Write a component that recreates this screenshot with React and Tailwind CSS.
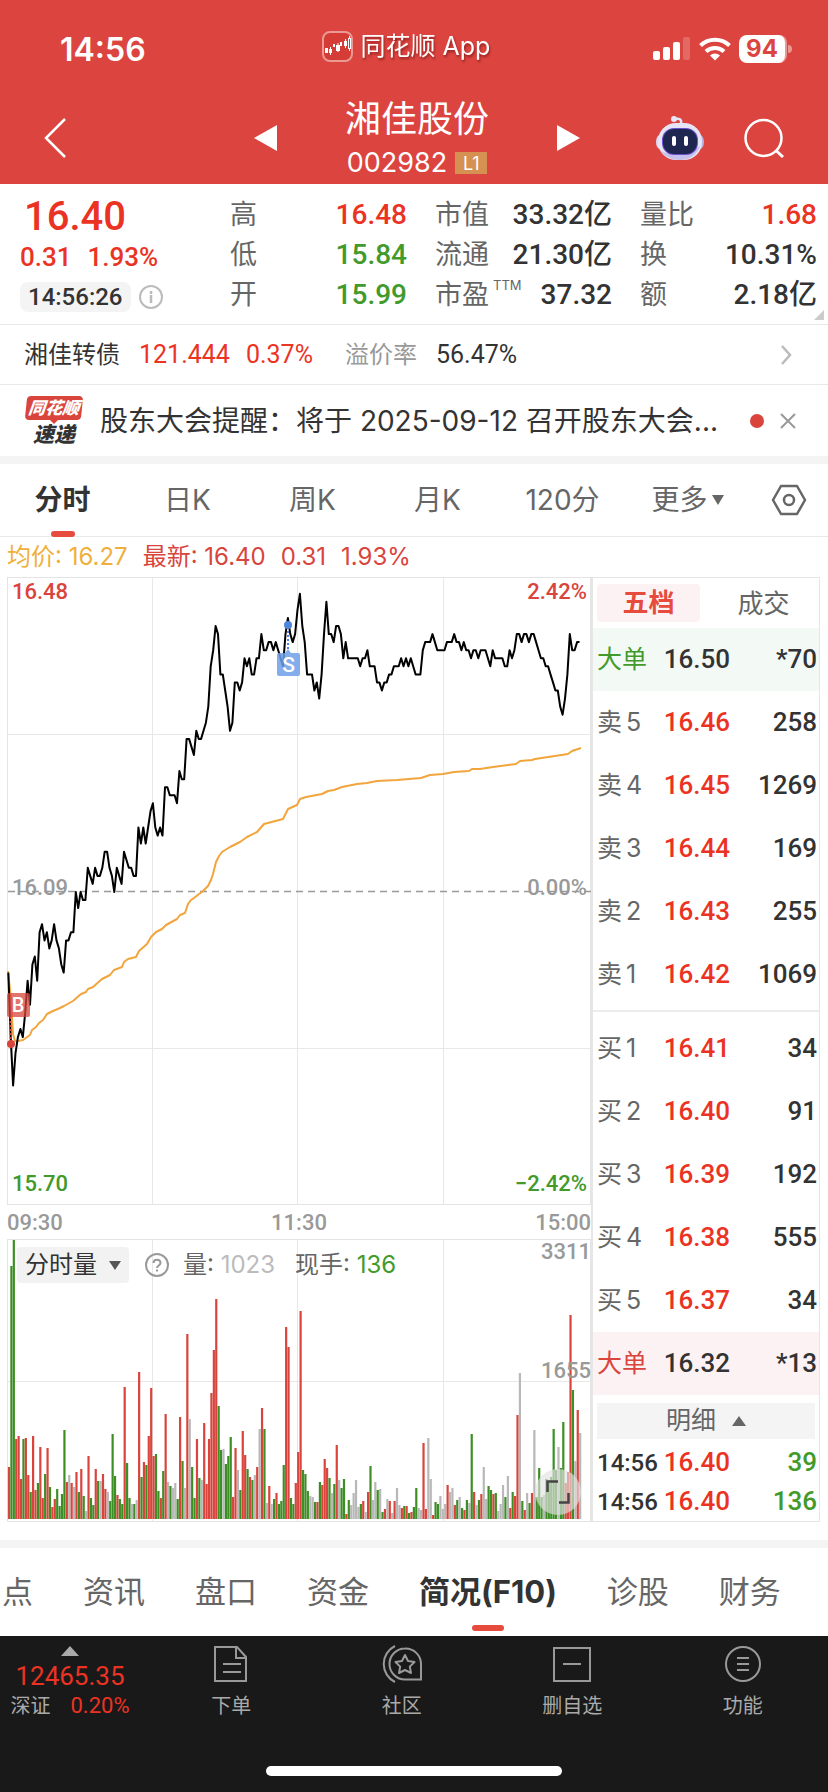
import { clsx } from 'clsx';

const PRICE_STEPS = [
  -10, -18, -24, -20, -18, -17, -18, -15, -11, -14, -9, -8, -11, -5, -4, -6, -5, -7, -6, -4,
  -6, -7, -9, -10, -6, -6, -5, -5, 0, -2, 0, -1, -1, 3, 2, 1, 3, 2, 2, 3,
  5, 5, 3, 2, 0, 3, 2, 1, 5, 4, 3, 3, 2, 2, 8, 6, 8, 6, 8, 10,
  11, 8, 7, 8, 7, 13, 13, 12, 12, 12, 11, 15, 14, 14, 19, 19, 18, 17, 20, 19,
  19, 20, 21, 23, 28, 30, 33, 32, 27, 27, 25, 23, 20, 21, 26, 26, 25, 26, 29, 28,
  29, 27, 27, 29, 29, 32, 30, 30, 31, 31, 30, 31, 30, 29, 28, 32, 34, 32, 31, 32,
  35, 37, 33, 31, 27, 27, 27, 25, 26, 24, 27, 32, 36, 32, 32, 31, 33, 33, 32, 29,
  31, 29, 29, 29, 29, 29, 28, 29, 29, 30, 28, 28, 28, 26, 26, 25, 26, 26, 27, 27,
  28, 28, 28, 29, 28, 29, 28, 29, 28, 27, 27, 27, 30, 31, 31, 31, 32, 31, 30, 30,
  30, 30, 31, 31, 31, 32, 31, 31, 30, 31, 30, 30, 29, 30, 30, 29, 30, 30, 30, 29,
  28, 30, 29, 29, 29, 29, 28, 28, 30, 29, 30, 32, 32, 31, 32, 32, 31, 32, 32, 31,
  30, 29, 29, 28, 28, 27, 26, 25, 25, 23, 22, 24, 27, 32, 30, 30, 31, 31,
];

const AVERAGE_LINE =
  '1,394 4,422 6,457 8,464 11,464 16,463 23,458 25,453 29,450 32,446 36,443 40,437 46,434 53,431 57,429 66,424 74,417 79,415 81,412 86,410 95,402 103,398 107,393 115,390 117,385 121,382 129,380 132,374 140,367 144,360 149,355 155,352 159,348 170,342 173,338 178,336 181,327 184,323 187,321 192,317 195,315 201,309 204,303 206,297 209,285 212,279 215,275 223,270 233,265 240,260 250,255 257,247 276,242 281,232 290,228 293,222 299,220 315,217 321,214 327,213 335,210 350,207 360,206 370,204 390,203 414,201 423,198 436,197 447,195 462,194 465,192 473,192 486,190 509,187 513,184 525,183 528,182 561,177 565,174 574,171';

// one entry per minute: r = up, g = down, x = flat, followed by the bar height
const VOLUME =
  'r52 g253 g279 r80 r83 r40 g80 r81 r44 g27 r83 r29 g36 r72 r21 g45 r71 g32 r12 r20 g30 g13 g25 g89 r37 x44 r36 x32 r47 g27 r50 g23 x8 r63 g21 g14 r50 g38 x38 r45 r30 x27 g18 g85 g43 r24 g20 g15 r132 g56 g21 x15 g15 x19 r147 g42 r57 g54 r83 r131 r63 g65 g28 r21 g48 r105 x37 g33 x31 x36 g20 r102 g58 x31 r185 x100 g52 g21 r80 g41 x39 r96 r35 r80 r126 r169 r220 g113 g69 x70 g55 g63 g82 r22 r71 x49 g29 r88 r64 g50 r42 g39 x44 r52 x90 r111 g90 x16 r33 x15 g20 r26 g15 g18 g54 r192 r172 g21 g15 r36 ' +
  'r67 r208 g49 g45 g28 x23 x22 g17 r17 g37 r34 r60 r51 g41 x26 g35 r74 x39 g31 g40 r5 g19 x14 x26 x39 x12 g15 r18 x7 r27 g53 x19 x37 g29 x30 g7 r10 x20 r18 x6 r18 x31 x14 r11 g13 r13 g6 r7 g12 g31 x11 x9 r76 r10 x81 x40 r4 g17 g15 x23 x10 x15 r34 x27 x31 r14 g19 x22 g11 r9 g19 x16 g85 r27 x14 g19 r25 x52 x20 g33 g29 r25 g26 x8 x15 x34 g22 x43 r11 g27 r23 r104 x146 g18 r9 x26 g16 r26 x89 g22 g51 g22 x24 g40 g36 g42 g90 g49 x72 g51 g97 r36 r47 r204 g129 x58 r109 x86';

const BAR_FILL = { r: '#d9443c', g: '#3d8f25', x: '#b8b8b8' };

const SELLS = [
  ['卖5', '16.46', '258'],
  ['卖4', '16.45', '1269'],
  ['卖3', '16.44', '169'],
  ['卖2', '16.43', '255'],
  ['卖1', '16.42', '1069'],
];

const BUYS = [
  ['买1', '16.41', '34'],
  ['买2', '16.40', '91'],
  ['买3', '16.39', '192'],
  ['买4', '16.38', '555'],
  ['买5', '16.37', '34'],
];

const RED = 'text-[#eb3323]';
const GREEN = 'text-[#429a2b]';
const NUM = "font-['Roboto','Noto_Sans_CJK_SC',sans-serif]";

function StatusBar() {
  return (
    <div className="grid h-23 grid-cols-3 items-center pl-10 pr-9">
      <span className="pl-5 pt-2 text-[32px] font-semibold leading-9">14:56</span>
      <div className="flex items-center justify-center gap-2 pr-5">
        <svg className="size-[31px]" viewBox="0 0 31 31" fill="none">
          <rect x="1" y="1" width="29" height="29" rx="7" stroke="#ec9994" strokeWidth="2" fill="#d63c36" />
          <g fill="#fff">
            <rect x="3" y="17" width="3" height="5" />
            <rect x="7" y="18" width="3" height="4" />
            <rect x="11" y="13" width="2" height="3" />
            <rect x="14" y="14" width="4" height="6" />
            <rect x="18" y="11" width="2" height="4" />
            <rect x="22" y="10" width="3" height="5" />
          </g>
          <path d="M8.500 16v8M16 12v9M23.500 8v9M27.500 5v3M27.500 17v3" stroke="#fff" />
          <rect x="26.500" y="7.500" width="2" height="10" stroke="#fff" />
        </svg>
        <span className="text-[25px] leading-8 drop-shadow-[1px_2px_1px_rgba(80,0,0,0.5)]">同花顺 App</span>
      </div>
      <div className="flex items-center justify-end gap-2 pt-[6px]">
        <svg className="h-6 w-[38px]" viewBox="0 0 38 24" fill="#fff">
          <rect x="0" y="14" width="7" height="9" rx="2" />
          <rect x="10" y="10" width="7" height="13" rx="2" />
          <rect x="20" y="5" width="7" height="18" rx="2" />
          <rect x="30" y="0" width="7" height="23" rx="2" opacity="0.2" />
        </svg>
        <svg className="h-6 w-8" viewBox="0 0 32 24" fill="none" stroke="#fff" strokeWidth="4">
          <path d="M1.500 8.500a21 21 0 0 1 29 0" />
          <path d="M7 14.500a13 13 0 0 1 18 0" />
          <path d="M16 23.500l-5-5a7 7 0 0 1 10 0z" fill="#fff" stroke="none" />
        </svg>
        <div className="flex items-center gap-px">
          <span className="flex h-7 w-12 items-center justify-center rounded-lg border-r-2 border-[#ec9994] bg-white text-[24px] font-bold text-[#dc443f]">
            94
          </span>
          <span className="h-2 w-1 rounded-r-full bg-[#ec9994]" />
        </div>
      </div>
    </div>
  );
}

function Robot() {
  return (
    <svg className="h-[46px] w-12" viewBox="0 0 48 46">
      <path d="M25 9c1-5-2-6-6-5" fill="none" stroke="#e6e3f5" strokeWidth="2.500" />
      <circle cx="18" cy="4" r="3" fill="#e9e6f7" />
      <ellipse cx="4" cy="27" rx="4" ry="7" fill="#dcd9f0" />
      <ellipse cx="44" cy="27" rx="4" ry="7" fill="#b9b4e2" />
      <rect x="2" y="8" width="44" height="37" rx="18" fill="#e6e4f5" />
      <path d="M44 31c-3 9-11 14-20 14-8 0-15-3-19-9 12 6 30 4 39-5z" fill="#c6c2ea" />
      <rect x="6" y="13" width="36" height="27" rx="12" fill="#6a4fd0" />
      <rect x="7" y="14" width="34" height="25" rx="11" fill="#1f2750" />
      <rect x="16" y="21" width="4" height="10" rx="2" fill="#fff" />
      <rect x="28" y="21" width="4" height="10" rx="2" fill="#fff" />
    </svg>
  );
}

function Header() {
  return (
    <header className="bg-[#dc443f] text-white">
      <StatusBar />
      <div className="grid h-23 grid-cols-[1fr_auto_1fr] items-center px-11">
        <button aria-label="返回" className="w-fit">
          <svg className="h-10 w-6" viewBox="0 0 24 40" fill="none" stroke="currentColor" strokeWidth="2.500">
            <path d="M21 1L2 20l19 19" />
          </svg>
        </button>
        <div className="flex items-center pl-[6px]">
          <button aria-label="上一只">
            <svg className="h-[26px] w-[23px]" viewBox="0 0 23 26" fill="currentColor">
              <path d="M23 0v26L0 13z" />
            </svg>
          </button>
          <div className="flex w-[280px] flex-col items-center gap-1">
            <h1 className="text-[36px] leading-[46px]">湘佳股份</h1>
            <div className="flex items-center gap-2">
              <span className="text-[27px] leading-[34px]">002982</span>
              <span className="flex h-[22px] w-8 items-center justify-center bg-[#d69052] text-[18px]">L1</span>
            </div>
          </div>
          <button aria-label="下一只">
            <svg className="h-[26px] w-[23px]" viewBox="0 0 23 26" fill="currentColor">
              <path d="M0 0v26l23-13z" />
            </svg>
          </button>
        </div>
        <div className="flex items-center justify-end gap-10">
          <button aria-label="助手">
            <Robot />
          </button>
          <button aria-label="搜索">
            <svg className="size-10" viewBox="0 0 40 40" fill="none" stroke="currentColor" strokeWidth="2.500">
              <circle cx="19.500" cy="20" r="18" />
              <path d="M32 32.500l7 6.500" strokeWidth="3" />
            </svg>
          </button>
        </div>
      </div>
    </header>
  );
}

function Stat({ label, sup, value, tone = 'text-[#333]' }) {
  return (
    <div className="flex h-10 items-center justify-between">
      <dt className="relative text-[27px] text-[#666]">
        {label}
        {sup && <span className="absolute left-full top-0 pl-1 text-[13px] leading-5">{sup}</span>}
      </dt>
      <dd className={clsx('text-[28px] font-medium', NUM, tone)}>{value}</dd>
    </div>
  );
}

function Quote() {
  return (
    <section className="relative flex border-b border-[#e8e8e8] pb-[9px] pr-[11px] pt-[11px]">
      <div className={clsx('flex w-[230px] flex-col pl-5', NUM)}>
        <span className={clsx('pl-1 text-[40px] font-medium leading-[44px]', RED)}>16.40</span>
        <span className={clsx('flex gap-4 pt-px text-[26px] font-medium leading-[34px]', RED)}>
          <span>0.31</span>
          <span>1.93%</span>
        </span>
        <div className="flex items-center gap-2 pt-2">
          <span className="rounded-lg bg-[#f4f4f4] px-2 text-[24px] font-medium leading-[30px] text-[#333]">
            14:56:26
          </span>
          <svg className="size-6" viewBox="0 0 24 24" fill="none" stroke="#bbb" strokeWidth="2">
            <circle cx="12" cy="12" r="11" />
            <path d="M12 10v8M12 6v3" strokeWidth="2.500" />
          </svg>
        </div>
      </div>
      <dl className="w-[177px]">
        <Stat label="高" value="16.48" tone={RED} />
        <Stat label="低" value="15.84" tone={GREEN} />
        <Stat label="开" value="15.99" tone={GREEN} />
      </dl>
      <dl className="w-[205px] pl-7">
        <Stat label="市值" value="33.32亿" />
        <Stat label="流通" value="21.30亿" />
        <Stat label="市盈" sup="TTM" value="37.32" />
      </dl>
      <dl className="flex-1 pl-7">
        <Stat label="量比" value="1.68" tone={RED} />
        <Stat label="换" value="10.31%" />
        <Stat label="额" value="2.18亿" />
      </dl>
      <svg className="absolute bottom-1 right-1 size-[10px]" viewBox="0 0 10 10" fill="#ccc">
        <path d="M10 0v10H0z" />
      </svg>
    </section>
  );
}

function BondRow() {
  return (
    <a href="#bond" className="flex h-[60px] items-center border-b border-[#e8e8e8] px-6 text-[24px] text-[#333]">
      <span>湘佳转债</span>
      <span className={clsx('pl-[19px] text-[25px]', NUM, RED)}>121.444</span>
      <span className={clsx('pl-4 text-[25px]', NUM, RED)}>0.37%</span>
      <span className="pl-8 text-[#999]">溢价率</span>
      <span className={clsx('pl-[19px] text-[25px]', NUM)}>56.47%</span>
      <svg className="ml-auto mr-3 h-5 w-3" viewBox="0 0 12 20" fill="none" stroke="#bbb" strokeWidth="2.500">
        <path d="M2 1l8 9-8 9" />
      </svg>
    </a>
  );
}

function Notice() {
  return (
    <div className="flex h-[71px] items-center pl-[26px] pr-8">
      <div className="w-[56px] shrink-0">
        <div className="-skew-x-6 rounded-sm bg-[#d9443c] text-center text-[17px] font-black italic leading-6 text-white">
          同花顺
        </div>
        <svg className="mx-auto h-1 w-2" viewBox="0 0 8 4" fill="#d9443c">
          <path d="M0 0h8L4 4z" />
        </svg>
        <div className="text-center text-[21px] font-black italic leading-[22px] text-[#333]">速递</div>
      </div>
      <p className="min-w-0 flex-1 truncate pl-[18px] text-[28px] text-[#333]">
        股东大会提醒：将于 2025-09-12 召开股东大会...
      </p>
      <span className="ml-5 size-[14px] shrink-0 rounded-full bg-[#d9443c]" />
      <button aria-label="关闭" className="ml-4">
        <svg className="size-4" viewBox="0 0 16 16" stroke="#999" strokeWidth="2">
          <path d="M1 1l14 14M15 1L1 15" />
        </svg>
      </button>
    </div>
  );
}

function PeriodTabs() {
  return (
    <nav className="flex h-[73px] items-center border-b border-[#e8e8e8] text-[28px] text-[#666]">
      <button className="relative flex-1 font-bold text-[#333]">
        分时
        <span className="absolute -bottom-4 left-1/2 h-[6px] w-6 -translate-x-1/2 rounded-full bg-[#e64b3e]" />
      </button>
      <button className="flex-1">日K</button>
      <button className="flex-1">周K</button>
      <button className="flex-1">月K</button>
      <button className="flex-1">120分</button>
      <button className="flex flex-1 items-center justify-center gap-1">
        更多
        <svg className="h-[10px] w-3" viewBox="0 0 12 10" fill="currentColor">
          <path d="M0 0h12L6 10z" />
        </svg>
      </button>
      <button aria-label="设置" className="w-[78px]">
        <svg className="mx-auto h-8 w-9" viewBox="0 0 36 32" fill="none" stroke="currentColor" strokeWidth="2.500">
          <path d="M10 2h16l8 14-8 14H10L2 16z" strokeLinejoin="round" />
          <circle cx="18" cy="16" r="5" />
        </svg>
      </button>
    </nav>
  );
}

function PriceChart() {
  const points = PRICE_STEPS.map((s, i) => `${(1.3 + i * 2.41).toFixed(1)},${(315 - s * 8.06).toFixed(1)}`).join(' ');

  return (
    <div className={clsx('relative h-[628px] text-[22px] font-medium leading-6', NUM)}>
      <svg className="block h-full w-full" viewBox="0 0 584 628" preserveAspectRatio="none" fill="none">
        <path d="M145.500 0v628M290.500 0v628M436.500 0v628M0 157.500h584M0 471.500h584" stroke="#e8e8e8" />
        <rect x="0.500" y="0.500" width="583" height="627" stroke="#e4e4e4" />
        <path d="M1 314.500h583" stroke="#999" strokeWidth="1.500" strokeDasharray="7 5" />
        <polyline points={AVERAGE_LINE} stroke="#f2a53c" strokeWidth="2" strokeLinejoin="round" />
        <polyline points={points} stroke="#000" strokeWidth="2" strokeLinejoin="round" />
        <path d="M281 50v26" stroke="#4f86dc" strokeWidth="2" strokeDasharray="2 2" />
        <circle cx="281" cy="48" r="4" fill="#4f86dc" />
        <path d="M278 76l3-4 3 4z" fill="#82acec" />
        <rect x="270" y="76" width="23" height="23" rx="2" fill="#6f9fe9" fillOpacity="0.850" />
        <text x="281.500" y="95" textAnchor="middle" fill="#fff" fontSize="21">S</text>
        <path d="M3.500 440v25" stroke="#d9443c" strokeWidth="2" strokeDasharray="2 2" />
        <circle cx="4" cy="467" r="4" fill="#d9443c" />
        <rect x="0" y="416" width="23" height="24" rx="2" fill="#d9443c" fillOpacity="0.750" />
        <text x="11" y="435" textAnchor="middle" fill="#fff" fontSize="20">B</text>
      </svg>
      <span className="absolute left-[5px] top-[3px] text-[#d9443c]">16.48</span>
      <span className="absolute right-1 top-[3px] text-[#d9443c]">2.42%</span>
      <span className="absolute left-[5px] top-[299px] text-[#999]">16.09</span>
      <span className="absolute right-1 top-[299px] text-[#999]">0.00%</span>
      <span className="absolute bottom-[9px] left-[5px] text-[#429a2b]">15.70</span>
      <span className="absolute bottom-[9px] right-1 text-[#429a2b]">−2.42%</span>
    </div>
  );
}

function VolumeChart() {
  return (
    <div className="relative h-[283px]">
      <svg className="block h-full w-full" viewBox="0 0 584 283" preserveAspectRatio="none" fill="none">
        <path d="M145.500 0v283M290.500 0v283M436.500 0v283M0 142.500h584" stroke="#e8e8e8" />
        <rect x="0.500" y="0.500" width="583" height="282" stroke="#e4e4e4" />
        {VOLUME.split(' ').map((bar, i) => {
          const height = Number(bar.slice(1));
          return <rect key={i} x={0.9 + i * 2.41} y={280 - height} width="2.200" height={height} fill={BAR_FILL[bar[0]]} />;
        })}
      </svg>
      <div className="absolute left-[10px] top-2 flex items-center text-[24px] leading-9 text-[#666]">
        <button className="flex items-center gap-3 rounded bg-[#f2f2f2] px-2 text-[#333]">
          分时量
          <svg className="h-[9px] w-3" viewBox="0 0 12 9" fill="#555">
            <path d="M0 0h12L6 9z" />
          </svg>
        </button>
        <button aria-label="说明" className="ml-4">
          <svg className="size-6" viewBox="0 0 24 24" fill="none" stroke="#999" strokeWidth="2">
            <circle cx="12" cy="12" r="11" />
            <path d="M8.500 10c0-4.500 7-4.500 7 0 0 2.500-3.500 2.500-3.500 5M12 16.500v2" />
          </svg>
        </button>
        <span className="pl-[14px]">量: <span className="text-[#bbb]">1023</span></span>
        <span className="pl-5">现手: <span className="text-[#429a2b]">136</span></span>
      </div>
      <span className={clsx('absolute right-0 top-px text-[22px] font-medium leading-6 text-[#999]', NUM)}>3311</span>
      <span className={clsx('absolute right-0 top-[120px] text-[22px] font-medium leading-6 text-[#999]', NUM)}>
        1655
      </span>
      <button
        aria-label="全屏"
        className="absolute bottom-[7px] right-[10px] flex size-[46px] items-center justify-center rounded-full bg-[#e2e2e2]/65"
      >
        <svg className="size-6" viewBox="0 0 24 24" fill="none" stroke="#444" strokeWidth="2.500">
          <path d="M1.500 12V1.500H12M22.500 13v9.500H13" />
        </svg>
      </button>
    </div>
  );
}

function BookRow({ row, labelTone = 'text-[#666]', priceTone = RED, volumeTone = 'text-[#333]', className }) {
  const [label, price, volume] = row;
  return (
    <tr className={className}>
      <th className={clsx('pl-1 text-left text-[25px] font-normal', labelTone)}>
        {label[0]}
        <span className={clsx(/\d/.test(label) && 'pl-1')}>{label.slice(1)}</span>
      </th>
      <td className={clsx('w-[64px] font-medium', NUM, priceTone)}>{price}</td>
      <td className={clsx('w-[89px] pr-[2px] text-right font-medium', NUM, volumeTone)}>{volume}</td>
    </tr>
  );
}

function OrderBook() {
  return (
    <aside className="flex w-[229px] shrink-0 flex-col border border-l-2 border-[#e6e6e6] text-[26px]">
      <div className="flex h-[50px] items-center px-1">
        <button className="h-[38px] w-[103px] rounded bg-[#fdf2f3] font-bold leading-[38px] text-[#e64b3e]">五档</button>
        <button className="flex-1 pl-3 text-[#666]">成交</button>
      </div>
      <table className="w-full">
        <tbody>
          <BookRow
            className="h-[63px] bg-[#f3faf6]"
            row={['大单', '16.50', '*70']}
            labelTone={GREEN}
            priceTone="text-[#333]"
          />
          {SELLS.map((row) => (
            <BookRow key={row[0]} row={row} className="h-[63px]" />
          ))}
        </tbody>
      </table>
      <div className="mt-1 border-t-2 border-[#ececec] pt-[5px]">
        <table className="w-full">
          <tbody>
            {BUYS.map((row) => (
              <BookRow key={row[0]} row={row} className="h-[63px]" />
            ))}
            <BookRow
              className="h-[63px] bg-[#fdf2f3]"
              row={['大单', '16.32', '*13']}
              labelTone="text-[#d9443c]"
              priceTone="text-[#333]"
            />
          </tbody>
        </table>
      </div>
      <button className="mx-1 mb-1 mt-2 flex h-9 items-center justify-center gap-4 bg-[#f4f4f4] text-[25px] text-[#666]">
        明细
        <svg className="h-[10px] w-[14px]" viewBox="0 0 14 10" fill="currentColor">
          <path d="M0 10h14L7 0z" />
        </svg>
      </button>
      <table className={clsx('w-full font-medium', NUM)}>
        <tbody>
          {['39', '136'].map((volume) => (
            <tr key={volume} className="h-[39px]">
              <td className="pl-1 text-[24px] text-[#333]">14:56</td>
              <td className={clsx('w-[64px]', RED)}>16.40</td>
              <td className={clsx('w-[89px] pr-[2px] text-right', GREEN)}>{volume}</td>
            </tr>
          ))}
        </tbody>
      </table>
    </aside>
  );
}

function SectionTabs() {
  return (
    <nav className="flex h-[88px] items-center gap-[50px] overflow-hidden whitespace-nowrap pl-[2px] text-[31px] text-[#666]">
      <button>点</button>
      <button>资讯</button>
      <button>盘口</button>
      <button>资金</button>
      <button className="relative font-bold text-[#333]">
        简况(F10)
        <span className="absolute -bottom-4 left-1/2 h-[6px] w-8 -translate-x-1/2 rounded-full bg-[#e64b3e]" />
      </button>
      <button>诊股</button>
      <button>财务</button>
    </nav>
  );
}

function Action({ label, children }) {
  return (
    <button className="flex flex-1 flex-col items-center gap-2 pt-2 text-[20px] leading-7">
      <svg className="size-10" viewBox="0 0 40 40" fill="none" stroke="#999" strokeWidth="2">
        {children}
      </svg>
      {label}
    </button>
  );
}

function BottomBar() {
  return (
    <footer className="flex h-[156px] flex-col justify-between bg-[#191919] pb-4 text-[#aaa]">
      <div className="flex">
        <div className={clsx('flex w-[140px] flex-col items-center pt-[10px]', NUM)}>
          <svg className="h-[10px] w-[18px]" viewBox="0 0 18 10" fill="#aaa">
            <path d="M0 10h18L9 0z" />
          </svg>
          <span className="pt-1 text-[26px] leading-8 text-[#eb3323]">12465.35</span>
          <span className="flex items-center gap-5 text-[20px] leading-7">
            深证
            <span className="text-[22px] text-[#eb3323]">0.20%</span>
          </span>
        </div>
        <div className="flex flex-1 pl-[6px]">
          <Action label="下单">
            <path d="M4 3h22l9 10v24H4zM25 3v11h10M12 20h18M12 28h18" />
          </Action>
          <Action label="社区">
            <path d="M13 2a20 20 0 0 0 0 36" />
            <path d="M23 4.500a15.500 15.500 0 1 0 0 31h16V20A15.500 15.500 0 0 0 23 4.500z" />
            <path d="M23 11l3 6 6.500 1-4.700 4.600L29 29l-6-3-6 3 1.200-6.400L13.500 18l6.500-1z" strokeLinejoin="round" />
          </Action>
          <Action label="删自选">
            <path d="M2 4h36v33H2zM11 20h18" />
          </Action>
          <Action label="功能">
            <circle cx="20" cy="20" r="17" />
            <path d="M14 14h12M14 20h12M14 26h12" />
          </Action>
        </div>
      </div>
      <div className="mx-auto h-[10px] w-[296px] rounded-full bg-white" />
    </footer>
  );
}

export default function App() {
  return (
    <div className="bg-white font-['Inter','Noto_Sans_CJK_SC',sans-serif]">
      <Header />
      <Quote />
      <BondRow />
      <Notice />
      <div className="h-2 bg-[#f4f4f4]" />
      <PeriodTabs />
      <main className="pb-[18px] pl-[7px] pr-2">
        <div className="flex h-10 items-center gap-[15px] text-[24px] text-[#d9443c]">
          <span className="text-[#efb03b]">均价: 16.27</span>
          <span>最新: 16.40</span>
          <span>0.31</span>
          <span>1.93%</span>
        </div>
        <div className="flex">
          <div className="min-w-0 flex-1">
            <PriceChart />
            <div className={clsx('flex h-[34px] items-center justify-between text-[22px] font-medium text-[#999]', NUM)}>
              <span>09:30</span>
              <span>11:30</span>
              <span>15:00</span>
            </div>
            <VolumeChart />
          </div>
          <OrderBook />
        </div>
      </main>
      <div className="h-2 bg-[#f4f4f4]" />
      <SectionTabs />
      <BottomBar />
    </div>
  );
}
